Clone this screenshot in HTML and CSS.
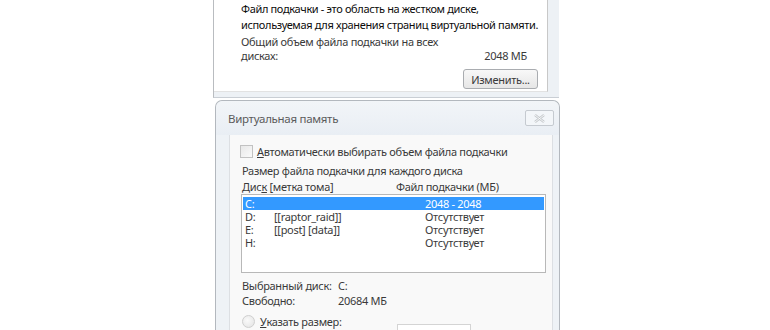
FILE: index.html
```html
<!DOCTYPE html>
<html lang="ru">
<head>
<meta charset="utf-8">
<link rel="stylesheet" href="styles.css">
</head>
<body>
<div class="stage">
  <div class="top-win">
    <div class="top-panel">
      <p class="desc">Файл подкачки - это область на жестком диске,<br>используемая для хранения страниц виртуальной памяти.</p>
      <div class="total">
        <span>Общий объем файла подкачки на всех<br>дисках:</span>
        <span class="total-val">2048 МБ</span>
      </div>
      <div class="btn-row"><button class="btn">Изменить...</button></div>
    </div>
    <div class="top-frame"></div>
  </div>

  <div class="dialog">
    <div class="titlebar">
      <span class="title">Виртуальная память</span>
      <span class="close"><svg width="13" height="9" viewBox="0 0 13 9"><path d="M2 1 L11 8 M11 1 L2 8" stroke="#c4c8cc" stroke-width="2.4" fill="none"/><path d="M2 1 L11 8 M11 1 L2 8" stroke="#fff" stroke-width="0.8" fill="none"/></svg></span>
    </div>
    <div class="client">
      <label class="check-row"><span class="checkbox"></span><span><u>А</u>втоматически выбирать объем файла подкачки</span></label>
      <div class="caption">Размер файла подкачки для каждого диска</div>
      <div class="list-head"><span class="h1">Дис<u>к</u> [метка тома]</span><span>Файл подкачки (МБ)</span></div>
      <div class="listbox">
        <div class="row sel"><span class="c1">C:</span><span class="c2"></span><span>2048 - 2048</span></div>
        <div class="row"><span class="c1">D:</span><span class="c2">[[raptor_raid]]</span><span>Отсутствует</span></div>
        <div class="row"><span class="c1">E:</span><span class="c2">[[post] [data]]</span><span>Отсутствует</span></div>
        <div class="row"><span class="c1">H:</span><span class="c2"></span><span>Отсутствует</span></div>
      </div>
      <div class="info first"><span class="k">Выбранный диск:</span><span>C:</span></div>
      <div class="info"><span class="k">Свободно:</span><span>20684 МБ</span></div>
      <label class="radio-row"><span class="radio"></span><span><u>У</u>казать размер:</span></label>
      <div class="field-row"><span class="field"></span></div>
    </div>
  </div>
</div>
</body>
</html>
```
FILE: styles.css
```css
html, body {
  margin: 0;
  padding: 0;
  background: #ffffff;
  width: 770px;
  height: 330px;
  overflow: hidden;
}
body {
  font-family: "Noto Sans", "Open Sans", sans-serif;
  font-size: 11px;
  letter-spacing: -0.3px;
  color: #3a3a3a;
  white-space: nowrap;
}
.stage {
  display: flex;
  flex-direction: column;
  align-items: flex-start;
  padding-left: 213px;
  gap: 2px;
}
.top-win {
  display: flex;
  width: 345px;
  height: 97px;
  border-left: 1px solid #b9bcc0;
  border-bottom: 1px solid #c9ced4;
  background: #edf1f5;
  flex-shrink: 0;
}
.top-panel {
  width: 334px;
  height: 92px;
  background: #fff;
  border-right: 1px solid #c8c8c8;
  border-bottom: 1px solid #e2e2e2;
  padding-left: 27px;
  box-sizing: border-box;
}
.top-frame { flex: 1; }
.desc {
  margin: 0;
  padding-top: 1px;
  line-height: 16px;
  color: #0c0c0c;
  letter-spacing: -0.35px;
}
.total {
  display: flex;
  justify-content: space-between;
  align-items: flex-end;
  margin-top: 2px;
  line-height: 14px;
  width: 286px;
}
.btn-row {
  display: flex;
  justify-content: flex-end;
  width: 297px;
  margin-top: 6px;
}
.btn {
  font: inherit;
  letter-spacing: inherit;
  color: #3a3a3a;
  width: 75px;
  height: 20px;
  padding: 0;
  border: 1px solid #a9acb0;
  border-radius: 3px;
  background: linear-gradient(#f8f8f8, #e6e6e6);
}
.dialog {
  width: 345px;
  margin-left: 2px;
  border: 1px solid #b3b8be;
  border-bottom: none;
  border-radius: 7px 7px 0 0;
  background: #eef2f6;
  display: flex;
  flex-direction: column;
  box-sizing: border-box;
  flex-shrink: 0;
}
.titlebar {
  height: 34px;
  flex-shrink: 0;
  display: flex;
  align-items: center;
  justify-content: space-between;
  padding: 0 5px 0 12px;
  background: linear-gradient(#f2f5f8, #e9eef4);
  border-radius: 7px 7px 0 0;
}
.title {
  color: #5b5b5b;
  font-size: 11.5px;
}
.close {
  width: 27px;
  height: 14px;
  border: 1px solid #c5cad0;
  border-radius: 2px;
  display: flex;
  align-items: center;
  justify-content: center;
  background: #f3f6f9;
}
.client {
  height: 220px;
  flex-shrink: 0;
  margin: 0 6px 0 13px;
  background: #f9f9f9;
  border-left: 1px solid #dcdfe3;
  border-right: 1px solid #dcdfe3;
  padding: 9px 0 0 10px;
  display: flex;
  flex-direction: column;
  align-items: flex-start;
}
u { text-decoration: underline; text-underline-offset: 1px; }
.check-row {
  display: flex;
  align-items: center;
  gap: 4px;
  height: 14px;
}
.checkbox {
  width: 11px;
  height: 11px;
  border: 1px solid #c2c2c2;
  background: linear-gradient(135deg, #e8e8e8, #fafafa);
}
.caption {
  margin-top: 5px;
  padding-left: 2px;
  line-height: 15px;
}
.list-head {
  display: flex;
  padding-left: 2px;
  line-height: 15px;
  margin-top: 1px;
}
.list-head .h1 { width: 154px; }
.listbox {
  width: 305px;
  height: 79px;
  flex-shrink: 0;
  box-sizing: border-box;
  border: 1px solid #b8b8b8;
  background: #fff;
  padding: 2px 1px;
  margin-left: 1px;
}
.row {
  display: flex;
  height: 13px;
  line-height: 13px;
  padding-left: 2px;
}
.row.sel {
  background: #3399ff;
  color: #fff;
}
.c1 { width: 29px; }
.c2 { width: 151px; }
.info {
  display: flex;
  padding-left: 2px;
  line-height: 15px;
}
.info.first { margin-top: 5px; }
.info .k { width: 96px; }
.radio-row {
  display: flex;
  align-items: center;
  gap: 5px;
  margin-top: 6px;
  padding-left: 2px;
  height: 14px;
}
.radio {
  width: 11px;
  height: 11px;
  border-radius: 50%;
  border: 1px solid #cfcfcf;
  background: radial-gradient(circle at 40% 40%, #fafafa, #e2e2e2);
}
.field-row {
  display: flex;
  padding-left: 157px;
  margin-top: -4px;
}
.field {
  width: 72px;
  height: 20px;
  border: 1px solid #d4d4d4;
  background: #fff;
}
```
